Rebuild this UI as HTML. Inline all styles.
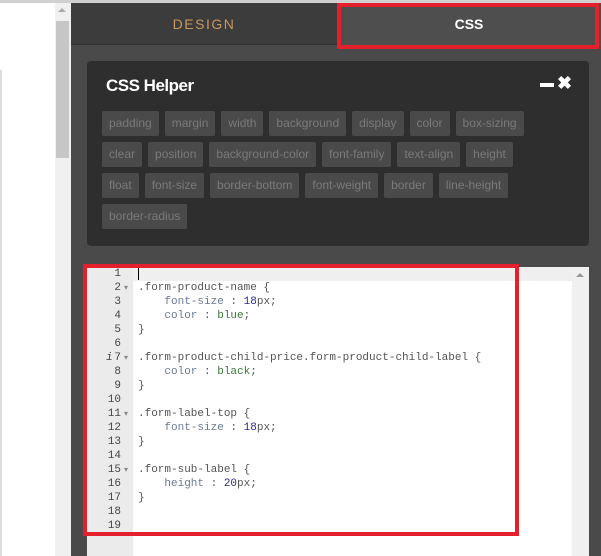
<!DOCTYPE html>
<html><head><meta charset="utf-8"><style>
*{margin:0;padding:0;box-sizing:border-box}
body{width:601px;height:556px;overflow:hidden;background:#4a4a4a;position:relative;font-family:"Liberation Sans",sans-serif}
.abs{position:absolute}
.tag{display:inline-block;background:#4a4a4a;color:#7a7a7a;font-size:12px;height:25px;line-height:25px;padding:0 7px;margin:0 6px 6px 0;border-radius:2px}
.code{font-family:"Liberation Mono",monospace;font-size:11px;line-height:14px;white-space:pre;color:#555}
.p{color:#6a7a9a}.v{color:#3a7a3a}.n{color:#2a2a8a}
.ar{position:absolute;left:124px;font-size:8px;color:#888;line-height:14px;font-family:"DejaVu Sans",sans-serif}
</style></head><body>
<div class="abs" style="left:0;top:0;width:601px;height:3px;background:#d0d0d0"></div>
<div class="abs" style="left:0;top:3px;width:71px;height:553px;background:#fff"></div>
<div class="abs" style="left:0;top:70px;width:2px;height:486px;background:#ddd"></div>
<div class="abs" style="left:55px;top:3px;width:16px;height:553px;background:#f0f0f0"></div>
<div class="abs" style="left:56px;top:21px;width:13px;height:137px;background:#c6c6c6"></div>
<div class="abs" style="left:58px;top:8px;width:0;height:0;border-left:4px solid transparent;border-right:4px solid transparent;border-bottom:4px solid #aaa"></div>
<div class="abs" style="left:71px;top:3px;width:266px;height:42px;background:#3c3c3c;border-bottom:1px solid #333;color:#c9965f;font-size:14px;letter-spacing:1.5px;text-align:center;line-height:42px">DESIGN</div>
<div class="abs" style="left:337px;top:3px;width:264px;height:43px;background:#4e4e4e;color:#fff;font-size:14px;font-weight:bold;text-align:center;line-height:43px">CSS</div>
<div class="abs" style="left:337px;top:3px;width:262px;height:46px;border:4px solid #e3202c"></div>
<div class="abs" style="left:87px;top:61px;width:502px;height:185px;background:#2e2e2e;border-radius:4px">
<div class="abs" style="left:19px;top:15px;color:#fff;font-size:17px;font-weight:bold;letter-spacing:-0.5px">CSS Helper</div>
<div class="abs" style="left:453px;top:22px;width:14px;height:4px;background:#fff"></div>
<div class="abs" style="left:470px;top:12px;color:#fff;font-size:18px;font-weight:bold">✖</div>
<div class="abs" style="left:15px;top:50px;width:460px">
<span class="tag">padding</span><span class="tag">margin</span><span class="tag">width</span><span class="tag">background</span><span class="tag">display</span><span class="tag">color</span><span class="tag">box-sizing</span><br>
<span class="tag">clear</span><span class="tag">position</span><span class="tag">background-color</span><span class="tag">font-family</span><span class="tag">text-align</span><span class="tag">height</span><br>
<span class="tag">float</span><span class="tag">font-size</span><span class="tag">border-bottom</span><span class="tag">font-weight</span><span class="tag">border</span><span class="tag">line-height</span><br>
<span class="tag">border-radius</span>
</div></div>
<div class="abs" style="left:87px;top:267px;width:502px;height:289px;background:#fff"></div>
<div class="abs" style="left:87px;top:267px;width:46px;height:289px;background:#ebebeb"></div>
<div class="abs" style="left:133px;top:267px;width:439px;height:14px;background:#efefef"></div>
<div class="abs" style="left:572px;top:267px;width:17px;height:289px;background:#f0f0f0"></div>
<div class="abs" style="left:576px;top:273px;width:0;height:0;border-left:4px solid transparent;border-right:4px solid transparent;border-bottom:4px solid #999"></div>
<div class="abs" style="left:138px;top:268px;width:1px;height:12px;background:#000"></div>
<div class="abs code" style="left:87px;top:267px;width:34px;text-align:right;color:#444">1
2
3
4
5
6
7
8
9
10
11
12
13
14
15
16
17
18
19</div>
<div class="ar" style="top:281px">▾</div>
<div class="ar" style="top:351px">▾</div>
<div class="ar" style="top:407px">▾</div>
<div class="ar" style="top:463px">▾</div>
<div class="abs code" style="left:106px;top:351px;color:#444;font-style:italic">i</div>
<div class="abs code" style="left:138px;top:267px">
.form-product-name {
    <span class="p">font-size</span> : <span class="n">18</span>px;
    <span class="p">color</span> : <span class="v">blue</span>;
}

.form-product-child-price.form-product-child-label {
    <span class="p">color</span> : <span class="v">black</span>;
}

.form-label-top {
    <span class="p">font-size</span> : <span class="n">18</span>px;
}

.form-sub-label {
    <span class="p">height</span> : <span class="n">20</span>px;
}</div>
<div class="abs" style="left:83px;top:264px;width:436px;height:272px;border:4px solid #e3202c"></div>
</body></html>
